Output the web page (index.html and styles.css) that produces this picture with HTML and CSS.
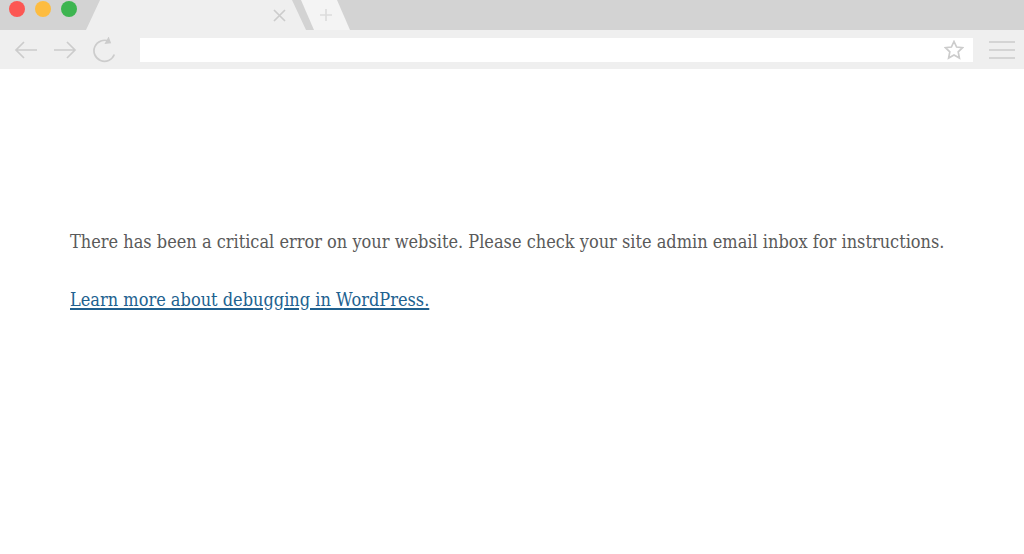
FILE: index.html
```html
<!DOCTYPE html>
<html lang="en">
<head>
    <meta charset="utf-8">
    <title>WordPress Critical Error</title>
    <link rel="stylesheet" href="styles.css">
</head>
<body>
    <header>
        <!-- Tab strip -->
        <div class="tab-strip">
            <div class="window-controls">
                <button class="dot red" aria-label="Close window"></button>
                <button class="dot yellow" aria-label="Minimize"></button>
                <button class="dot green" aria-label="Maximize"></button>
            </div>
            <div class="tab">
                <button aria-label="Close tab">
                    <svg width="13" height="13" viewBox="0 0 13 13"><path d="M1 1L12 12M12 1L1 12"/></svg>
                </button>
            </div>
            <button class="new-tab" aria-label="New tab">
                <svg width="12" height="12" viewBox="0 0 12 12"><path d="M6 0V12M0 6H12"/></svg>
            </button>
        </div>

        <!-- Toolbar -->
        <div class="toolbar">
            <nav>
                <button aria-label="Back">
                    <svg width="24" height="18" viewBox="0 0 24 18"><path d="M23 9H2M10 1L2 9L10 17"/></svg>
                </button>
                <button aria-label="Forward">
                    <svg width="24" height="18" viewBox="0 0 24 18"><path d="M1 9H22M14 1L22 9L14 17"/></svg>
                </button>
                <button aria-label="Reload">
                    <svg width="24" height="26" viewBox="0 0 24 26">
                        <path d="M17 4.3A10.5 10.5 0 1 0 22.3 17.5"/>
                        <path class="solid" d="M16.5 1.5L18 5.5L14 6Z"/>
                    </svg>
                </button>
            </nav>
            <div class="address">
                <input type="text" aria-label="Address">
                <button aria-label="Bookmark">
                    <svg width="20" height="20" viewBox="0 0 20 20"><path d="M10 1.5L12.6 7L18.6 7.7L14.2 11.8L15.4 18L10 15L4.6 18L5.8 11.8L1.4 7.7L7.4 7Z"/></svg>
                </button>
            </div>
            <button aria-label="Menu">
                <svg width="26" height="18" viewBox="0 0 26 18"><path d="M0 1H26M0 9H26M0 17H26"/></svg>
            </button>
        </div>
    </header>

    <main>
        <p>There has been a critical error on your website. Please check your site admin email inbox for instructions.</p>
        <p><a href="#">Learn more about debugging in WordPress.</a></p>
    </main>
</body>
</html>
```

FILE: styles.css
```css
body {
    margin: 0;
    background-color: #fff;
    color: #5a5a5a;
    font-family: "DejaVu Serif Condensed", "DejaVu Serif", serif;
}

button {
    display: flex;
    padding: 0;
    border: none;
    background: none;
    cursor: pointer;
}

svg {
    fill: none;
    stroke: #cccccc;
    stroke-width: 1.7;
}

.solid {
    fill: #cccccc;
}

/* Tab strip */
.tab-strip {
    display: flex;
    height: 30px;
    background-color: #d3d3d3;
}

.window-controls {
    display: flex;
    gap: 10px;
    padding: 1px 9px;
}

.dot {
    width: 16px;
    height: 16px;
    border-radius: 50%;
}

.red {
    background-color: #fc5753;
}

.yellow {
    background-color: #fdbc40;
}

.green {
    background-color: #3db550;
}

.tab {
    display: flex;
    align-items: center;
    justify-content: flex-end;
    box-sizing: border-box;
    width: 220px;
    padding-right: 20px;
    background-color: #efefef;
    clip-path: polygon(14px 0, 206px 0, 100% 100%, 0 100%);
}

.new-tab {
    align-items: center;
    justify-content: center;
    width: 49px;
    margin-left: -5px;
    background-color: #f4f4f4;
    clip-path: polygon(0 0, 36px 0, 100% 100%, 13px 100%);
}

.new-tab svg {
    stroke: #dcdcdc;
}

/* Toolbar */
.toolbar {
    display: flex;
    align-items: center;
    height: 39px;
    padding: 0 9px 0 14px;
    background-color: #efefef;
}

nav {
    display: flex;
    align-items: center;
    gap: 15px;
    margin-right: 24px;
}

.address {
    display: flex;
    flex: 1;
    align-items: center;
    height: 24px;
    margin-right: 16px;
    padding-right: 9px;
    background-color: #fff;
}

.address input {
    flex: 1;
    border: none;
    outline: none;
    background: none;
}

/* Error message */
main {
    padding: 158px 64px 0 70px;
}

p {
    margin: 0 0 28px;
    font-size: 18px;
    line-height: 30px;
}

a {
    color: #21618f;
    text-decoration-color: #21618f;
    text-decoration-thickness: 2px;
    text-underline-offset: 2px;
}
```
